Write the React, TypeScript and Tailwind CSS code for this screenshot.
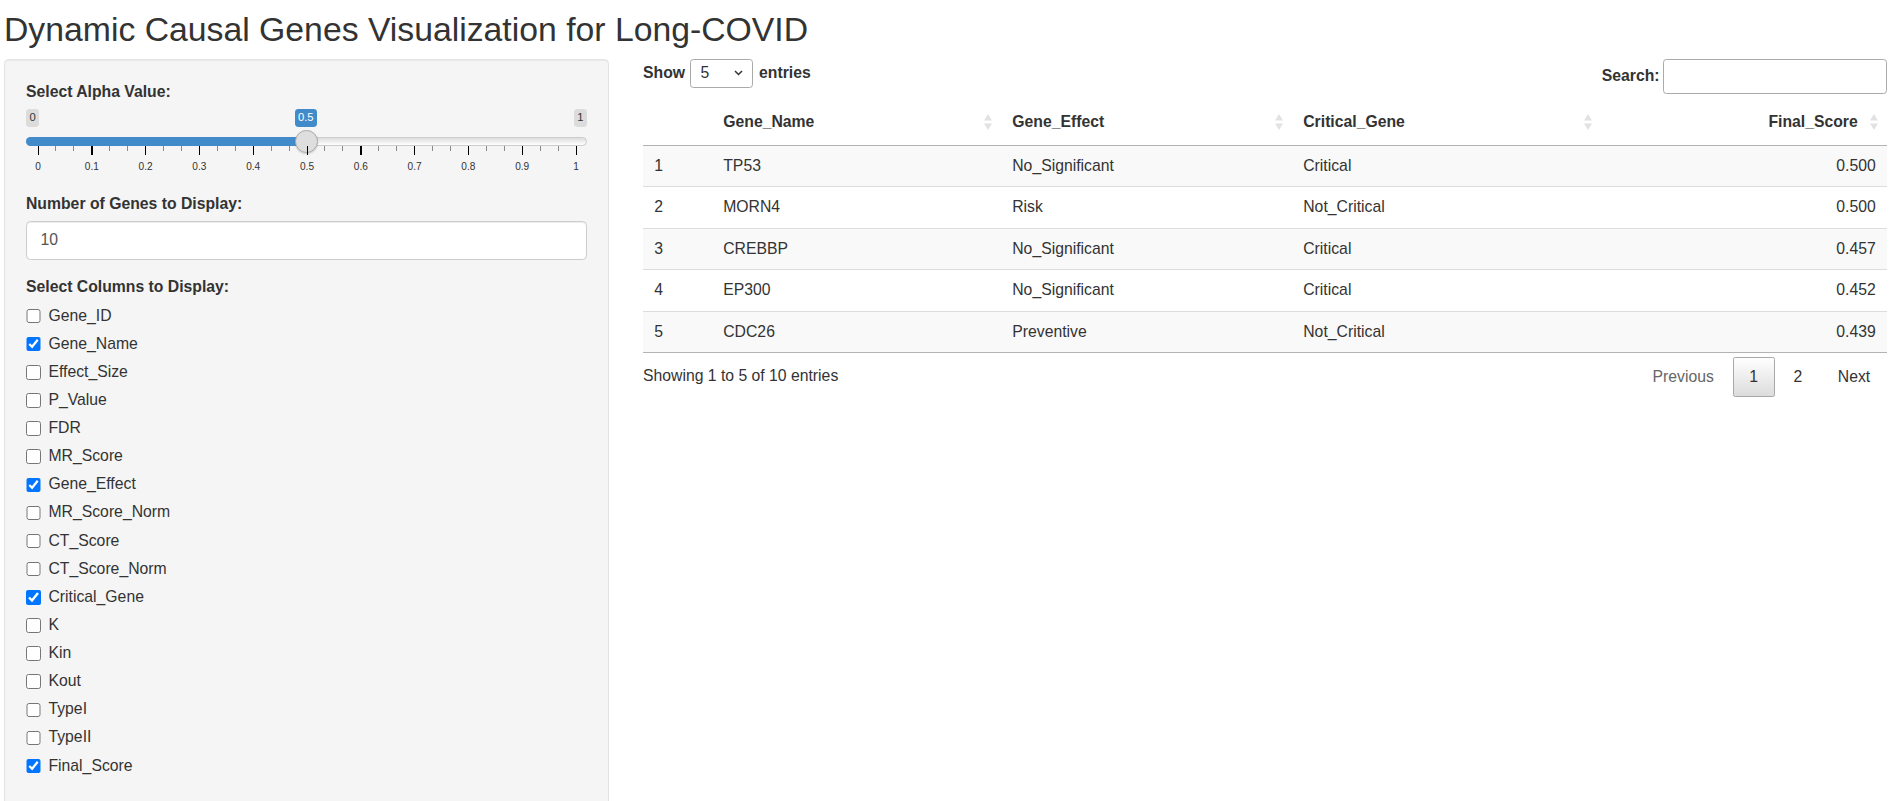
import React from "react";

type ColumnOption = { name: string; checked: boolean };

const columnOptions: ColumnOption[] = [
  { name: "Gene_ID", checked: false },
  { name: "Gene_Name", checked: true },
  { name: "Effect_Size", checked: false },
  { name: "P_Value", checked: false },
  { name: "FDR", checked: false },
  { name: "MR_Score", checked: false },
  { name: "Gene_Effect", checked: true },
  { name: "MR_Score_Norm", checked: false },
  { name: "CT_Score", checked: false },
  { name: "CT_Score_Norm", checked: false },
  { name: "Critical_Gene", checked: true },
  { name: "K", checked: false },
  { name: "Kin", checked: false },
  { name: "Kout", checked: false },
  { name: "TypeI", checked: false },
  { name: "TypeII", checked: false },
  { name: "Final_Score", checked: true },
];

const rows = [
  { id: 1, gene: "TP53", effect: "No_Significant", critical: "Critical", score: "0.500" },
  { id: 2, gene: "MORN4", effect: "Risk", critical: "Not_Critical", score: "0.500" },
  { id: 3, gene: "CREBBP", effect: "No_Significant", critical: "Critical", score: "0.457" },
  { id: 4, gene: "EP300", effect: "No_Significant", critical: "Critical", score: "0.452" },
  { id: 5, gene: "CDC26", effect: "Preventive", critical: "Not_Critical", score: "0.439" },
];

function AlphaSlider() {
  const ticks = Array.from({ length: 11 }, (_, i) => i / 10);
  const minor = Array.from({ length: 10 }, (_, i) => i).flatMap((i) => [i / 10 + 1 / 30, i / 10 + 2 / 30]);

  return (
    <div className="relative h-[67.5px]">
      <span className="absolute left-0 top-0 rounded-[3.4px] bg-[#dcdcdc] px-[3.4px] py-[1.5px] text-[11.25px] leading-[15px]">0</span>
      <span className="absolute right-0 top-0 rounded-[3.4px] bg-[#dcdcdc] px-[3.4px] py-[1.5px] text-[11.25px] leading-[15px]">1</span>
      <span className="absolute left-[268.5px] top-0 rounded-[3.4px] bg-[#428bca] px-[3.4px] py-[1.5px] text-[11.25px] leading-[15px] text-white">0.5</span>

      <div className="absolute left-0 right-0 top-[28.5px] h-[9px] rounded-full border border-[#cccccc] bg-gradient-to-b from-[#dddddd] to-white" />
      <div className="absolute left-0 top-[28.5px] h-[9px] w-[280px] rounded-l-full bg-[#428bca]" />
      <div className="absolute left-[268.5px] top-[21.5px] h-[23px] w-[23px] rounded-full border border-[#aaaaaa] bg-[#dedede] shadow-[0_1px_2px_rgba(0,0,0,0.15)]" />

      <div className="absolute left-[11.5px] right-[11.5px] top-[37.5px] h-[30px]">
        {minor.map((t) => (
          <span key={`m-${t}`} className="absolute top-0 h-[4.5px] w-px bg-[#8a8a8a]" style={{ left: `${t * 100}%` }} />
        ))}
        {ticks.map((t) => (
          <span key={`t-${t}`} className="absolute top-0 h-[9px] w-[1.3px] bg-black" style={{ left: `${t * 100}%` }} />
        ))}
        {ticks.map((t) => (
          <span key={`l-${t}`} className="absolute top-[14.5px] -translate-x-1/2 text-[10.1px] leading-[12px] text-[#333]" style={{ left: `calc(${t * 100}% + 0.5px)` }}>
            {t === 0 ? "0" : t === 1 ? "1" : t.toFixed(1)}
          </span>
        ))}
      </div>
    </div>
  );
}

function SortIcon() {
  return (
    <svg className="absolute right-[9.5px] top-1/2 -translate-y-1/2" width="8" height="18" viewBox="0 0 8 18">
      <polygon points="0,7.5 4,1 8,7.5" fill="#333" opacity="0.14" />
      <polygon points="0,10.5 8,10.5 4,17" fill="#333" opacity="0.14" />
    </svg>
  );
}

export default function App() {
  return (
    <div className="h-[801px] overflow-hidden bg-white font-['Liberation_Sans',Arial,sans-serif] text-[15.75px] leading-[22.5px] text-[#333]">
      <h2 className="pl-[4px] pt-[10.5px] mb-[11.25px] text-[33.75px] leading-[37px] font-normal">Dynamic Causal Genes Visualization for Long-COVID</h2>

      <div className="flex gap-[34px] pl-[4px] pr-[5px]">
        {/* sidebar */}
        <div className="w-[605px] shrink-0 h-[900px] rounded-[4.5px] border border-[#e3e3e3] bg-[#f5f5f5] p-[21px] shadow-[inset_0_1px_1px_rgba(0,0,0,0.05)]">
          <div className="mb-[16.9px]">
            <label className="mb-[5.6px] block font-bold">Select Alpha Value:</label>
            <AlphaSlider />
          </div>

          <div className="mb-[16.9px]">
            <label className="mb-[5.6px] block font-bold">Number of Genes to Display:</label>
            <div className="h-[38.25px] rounded-[4.5px] border border-[#cccccc] bg-white px-[13.5px] py-[6.75px] text-[#555] shadow-[inset_0_1px_1px_rgba(0,0,0,0.075)]">10</div>
          </div>

          <div>
            <label className="mb-[5.6px] block font-bold">Select Columns to Display:</label>
            <div className="flex flex-col gap-[5.625px]">
              {columnOptions.map((c) => (
                <label key={c.name} className="flex items-start">
                  <input type="checkbox" defaultChecked={c.checked} className="m-0 mt-[4.2px] mr-[7.9px] h-[14.6px] w-[14.6px] shrink-0" />
                  <span>{c.name}</span>
                </label>
              ))}
            </div>
          </div>
        </div>

        {/* table area */}
        <div className="min-w-0 flex-1">
          <div className="flex h-[41px] items-start justify-between">
            <div className="flex items-center font-bold">
              <span>Show</span>
              <div className="ml-[4.5px] mr-[6.5px] flex h-[29px] w-[63px] items-center justify-between rounded-[3.4px] border border-[#aaaaaa] bg-white pl-[10px] pr-[9px] font-normal">
                <span className="font-normal">5</span>
                <svg width="9" height="6" viewBox="0 0 9 6">
                  <path d="M1 1l3.5 3.5L8 1" fill="none" stroke="#333" strokeWidth="1.5" />
                </svg>
              </div>
              <span>entries</span>
            </div>
            <div className="flex items-center font-bold">
              <span>Search:</span>
              <div className="ml-[3.4px] h-[35px] w-[224px] rounded-[3.4px] border border-[#aaaaaa] bg-white" />
            </div>
          </div>

          <table className="w-full table-fixed border-collapse">
            <colgroup>
              <col className="w-[69px]" />
              <col className="w-[289px]" />
              <col className="w-[291px]" />
              <col className="w-[309px]" />
              <col />
            </colgroup>
            <thead>
              <tr className="border-b border-[#b3b3b3]">
                <th className="px-[11.25px] py-[11.25px] text-left font-bold"></th>
                <th className="relative py-[11.25px] pl-[11.25px] pr-[29.25px] text-left font-bold">Gene_Name<SortIcon /></th>
                <th className="relative py-[11.25px] pl-[11.25px] pr-[29.25px] text-left font-bold">Gene_Effect<SortIcon /></th>
                <th className="relative py-[11.25px] pl-[11.25px] pr-[29.25px] text-left font-bold">Critical_Gene<SortIcon /></th>
                <th className="relative py-[11.25px] pl-[11.25px] pr-[29.25px] text-right font-bold">Final_Score<SortIcon /></th>
              </tr>
            </thead>
            <tbody className="border-b border-[#b3b3b3]">
              {rows.map((r, i) => (
                <tr key={r.id} className={`${i % 2 === 0 ? "bg-[#f9f9f9]" : "bg-white"} ${i > 0 ? "border-t border-[#dddddd]" : ""}`}>
                  <td className="px-[11.25px] py-[9px]">{r.id}</td>
                  <td className="px-[11.25px] py-[9px]">{r.gene}</td>
                  <td className="px-[11.25px] py-[9px]">{r.effect}</td>
                  <td className="px-[11.25px] py-[9px]">{r.critical}</td>
                  <td className="px-[11.25px] py-[9px] text-right">{r.score}</td>
                </tr>
              ))}
            </tbody>
          </table>

          <div className="flex items-start justify-between">
            <div className="pt-[11.9px]">Showing 1 to 5 of 10 entries</div>
            <div className="flex pt-[3.9px]">
              <span className="ml-[2px] border border-transparent px-[15.75px] py-[7.9px] text-[#666]">Previous</span>
              <span className="ml-[2px] rounded-[2.25px] border border-[#a8a8a8] bg-gradient-to-b from-white to-[#dcdcdc] px-[15.75px] py-[7.9px]">1</span>
              <span className="ml-[2px] border border-transparent px-[15.75px] py-[7.9px]">2</span>
              <span className="ml-[2px] border border-transparent px-[15.75px] py-[7.9px]">Next</span>
            </div>
          </div>
        </div>
      </div>
    </div>
  );
}
